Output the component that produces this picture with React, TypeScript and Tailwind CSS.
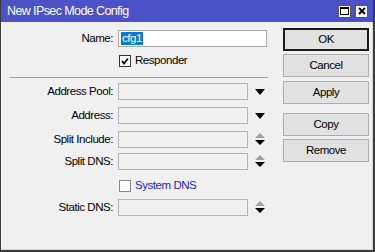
const font = { fontFamily: '"Liberation Sans", Arial, sans-serif' };

const DownArrow = () => (
  <svg width="10" height="6" viewBox="0 0 10 6" className="ml-[7px]">
    <polygon points="0,0 10,0 5,6" fill="#000" />
  </svg>
);

const Spinner = () => (
  <svg width="10" height="13" viewBox="0 0 10 13" className="ml-[7px]">
    <polygon points="5,0 10,5 0,5" fill="#a0a0a0" />
    <polygon points="0,7 10,7 5,12" fill="#000" />
  </svg>
);

type FieldProps = { label: string; arrow: "down" | "spin"; className?: string };

const Field = ({ label, arrow, className = "" }: FieldProps) => (
  <div className={`flex items-center h-[17px] ${className}`}>
    <span className="w-[113px] text-right pr-[1px] text-[11.5px] tracking-[-0.45px] text-black">{label}</span>
    <div className="ml-[4px] w-[130px] h-[17px] border border-[#b4b4b4] bg-[#f0f0f0]" />
    {arrow === "down" ? <DownArrow /> : <Spinner />}
  </div>
);

const Btn = ({ text, primary, className = "" }: { text: string; primary?: boolean; className?: string }) => (
  <div
    className={`w-[86px] h-[23px] flex items-center justify-center text-[11.5px] tracking-[-0.45px] text-black bg-[#e1e1e1] ${
      primary ? "border-2 border-[#1a1a1a]" : "border border-[#adadad]"
    } ${className}`}
  >
    {text}
  </div>
);

export default function App() {
  return (
    <div style={font} className="w-[375px] h-[252px] flex flex-col bg-[#f0f0f0] border-l border-[#3c3c3c] border-r-2 border-b-2 overflow-hidden">
      <div className="h-[22px] shrink-0 bg-[#4b51c6] flex items-center pl-[6px] pr-[5px]">
        <span className="text-white text-[12.5px] tracking-[-0.6px]">New IPsec Mode Config</span>
        <div className="ml-auto flex gap-[4px]">
          <div className="w-[13px] h-[13px] bg-white border border-[#555] flex items-center justify-center">
            <div className="w-[9px] h-[8px] border border-black border-t-2" />
          </div>
          <div className="w-[13px] h-[13px] bg-white border border-[#555] flex items-center justify-center">
            <svg width="8" height="8" viewBox="0 0 8 8">
              <path d="M1 1 L7 7 M7 1 L1 7" stroke="#000" strokeWidth="2" />
            </svg>
          </div>
        </div>
      </div>
      <div className="flex flex-1 border-r border-b border-[#d8d8d8]">
        <div className="w-[281px] flex flex-col pt-[8px]">
          <div className="flex items-center h-[17px]">
            <span className="w-[113px] text-right pr-[1px] text-[11.5px] tracking-[-0.45px] text-black">Name:</span>
            <div className="ml-[4px] w-[149px] h-[17px] border border-[#a8a8a8] bg-white flex items-center px-[2px]">
              <span className="bg-[#0a78d7] text-white text-[11.5px] tracking-[-0.45px] leading-[13px] px-[1px]">cfg1</span>
            </div>
          </div>
          <div className="flex items-center mt-[8px] pl-[118px] h-[12px]">
            <div className="w-[12px] h-[12px] border border-[#333] bg-white flex items-center justify-center">
              <svg width="8" height="8" viewBox="0 0 8 8">
                <path d="M1 4 L3 6.5 L7 1.5" stroke="#000" strokeWidth="1.8" fill="none" />
              </svg>
            </div>
            <span className="ml-[4px] text-[11.5px] tracking-[-0.45px] text-black">Responder</span>
          </div>
          <div className="mt-[10px] ml-[9px] w-[258px] h-[1px] bg-[#a0a0a0]" />
          <Field label="Address Pool:" arrow="down" className="mt-[5px]" />
          <Field label="Address:" arrow="down" className="mt-[7px]" />
          <Field label="Split Include:" arrow="spin" className="mt-[7px]" />
          <Field label="Split DNS:" arrow="spin" className="mt-[5px]" />
          <div className="flex items-center mt-[10px] pl-[118px] h-[12px]">
            <div className="w-[12px] h-[12px] border border-[#8a8a8a] bg-white" />
            <span className="ml-[4px] text-[11.5px] tracking-[-0.45px] text-[#1c1cc8]">System DNS</span>
          </div>
          <Field label="Static DNS:" arrow="spin" className="mt-[7px]" />
        </div>
        <div className="flex flex-col pt-[6px] pl-[1px]">
          <Btn text="OK" primary />
          <Btn text="Cancel" className="mt-[3px]" />
          <Btn text="Apply" className="mt-[4px]" />
          <Btn text="Copy" className="mt-[9px]" />
          <Btn text="Remove" className="mt-[3px]" />
        </div>
      </div>
    </div>
  );
}
